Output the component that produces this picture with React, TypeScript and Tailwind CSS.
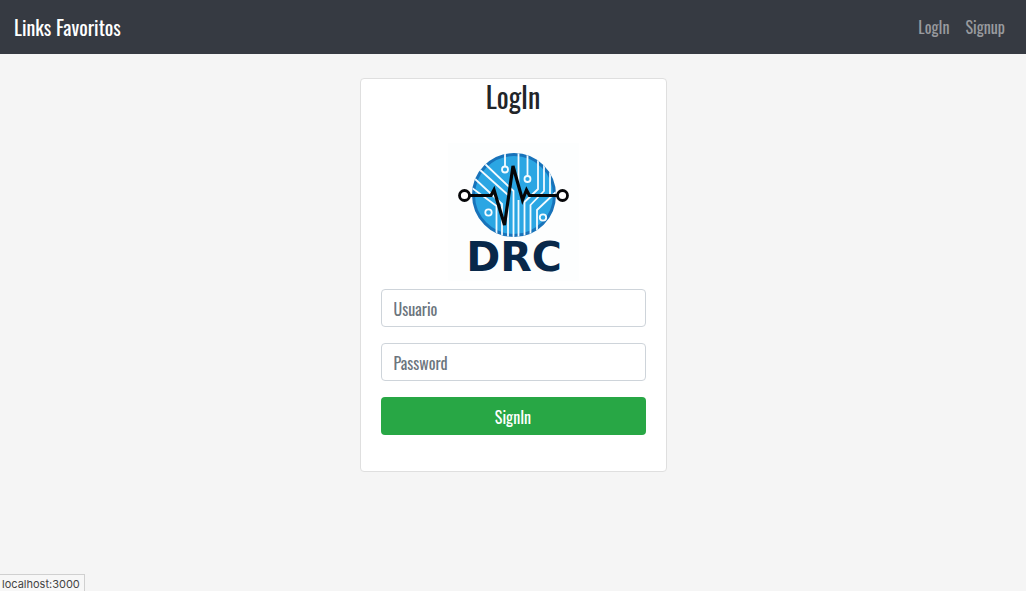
import React from "react";

function Logo() {
  return (
    <svg role="img" aria-label="DRC" viewBox="448 143 131 138" className="block h-[138px] w-[131px] overflow-visible">
      <rect x="448" y="143" width="131" height="138" fill="#fdfefe" />
      <defs>
        <clipPath id="disc">
          <circle cx="514" cy="195" r="42" />
        </clipPath>
      </defs>
      <circle cx="514" cy="195" r="40.5" fill="#2ba6e3" stroke="#1873ba" strokeWidth="3" />
      <g clipPath="url(#disc)" fill="none" stroke="#f4fbff" strokeWidth="1.8">
        <path d="M505 152V166M518.5 152V185M527.5 152V176M538 152V189L524.5 202V238M544 152V191L530.5 205V238M550 152V194" />
        <path d="M484 163L513.5 191V238M479 169L508 195V238M474 178L502 204V238M472 188L496.5 206V238" />
        <path d="M518.5 238V200M556 192L537 210V238" />
        <circle cx="505" cy="169.5" r="3" fill="#2ba6e3" />
        <circle cx="527.5" cy="179" r="3" fill="#2ba6e3" />
        <circle cx="488.5" cy="212.5" r="3.2" fill="#2ba6e3" />
        <circle cx="543" cy="217.5" r="3.2" fill="#2ba6e3" />
      </g>
      <path d="M470 195.5H491L494 190L504.5 225L513 166L522.5 200L526.5 190L529.5 195.5H557" fill="none" stroke="#050608" strokeWidth="3.2" />
      <circle cx="464.5" cy="195.5" r="5" fill="#fff" stroke="#050608" strokeWidth="2.8" />
      <circle cx="562.5" cy="195.5" r="5" fill="#fff" stroke="#050608" strokeWidth="2.8" />
      <text x="514" y="271" textAnchor="middle" fill="#08284a" className="font-['DejaVu_Sans',sans-serif] text-[41px] font-bold">DRC</text>
    </svg>
  );
}

const field =
  "block h-[38px] w-full rounded border border-[#ced4da] bg-white px-3 pt-0.5 text-base text-[#495057] placeholder:text-[#6c757d] placeholder:opacity-100";

export default function App() {
  return (
    <div className="flex min-h-screen flex-col bg-[#f5f5f5] font-['Oswald','Liberation_Sans_Narrow','Roboto_Condensed',sans-serif] text-[#212529]">
      <nav className="flex h-[54px] items-center justify-between bg-[#363a42] pr-[21px] pl-3.5">
        <a href="#home" className="text-xl text-white">Links Favoritos</a>
        <div className="flex gap-4 text-base text-[#999b9f]">
          <a href="#login">LogIn</a>
          <a href="#signup">Signup</a>
        </div>
      </nav>
      <main className="flex flex-1 justify-center pt-6">
        <section className="w-[307px] self-start rounded border border-[#dfdfdf] bg-white">
          <h1 className="text-center text-[28px] leading-9">LogIn</h1>
          <div className="mt-7 flex justify-center">
            <Logo />
          </div>
          <form className="flex flex-col gap-4 px-5 pt-2 pb-9" onSubmit={(e) => e.preventDefault()}>
            <input className={field} type="text" aria-label="Usuario" placeholder="Usuario" />
            <input className={field} type="password" aria-label="Password" placeholder="Password" />
            <button type="submit" className="h-[38px] w-full rounded bg-[#28a745] pt-0.5 text-base text-white">SignIn</button>
          </form>
        </section>
      </main>
      <div className="fixed bottom-0 left-0 h-[17px] border-t border-r border-[#d0d0d0] bg-[#f7f7f7] pr-1 pl-0.5 font-['Inter',sans-serif] text-[11px] leading-[18px] text-[#444]">localhost:3000</div>
    </div>
  );
}
